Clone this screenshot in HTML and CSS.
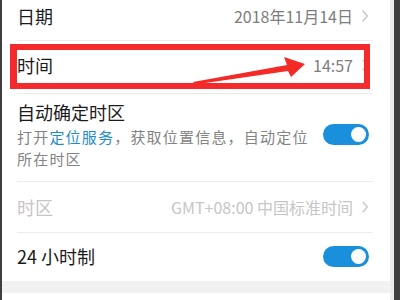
FILE: index.html
```
<!DOCTYPE html>
<html lang="zh-CN">
<head>
<meta charset="utf-8">
<link rel="stylesheet" href="styles.css">
</head>
<body>
<div class="screen">
  <div class="panel">
    <div class="row row-date">
      <span class="label">日期</span>
      <span class="value">2018年11月14日</span>
      <svg class="chev" width="6" height="12" viewBox="0 0 6 12"><polyline points="0.7,0.7 5.3,6 0.7,11.3" fill="none" stroke="#c4c4c4" stroke-width="1.4"/></svg>
    </div>
    <div class="row row-time">
      <span class="label">时间</span>
      <span class="value">14:57</span>
      <svg class="chev" width="6" height="12" viewBox="0 0 6 12"><polyline points="0.7,0.7 5.3,6 0.7,11.3" fill="none" stroke="#c4c4c4" stroke-width="1.4"/></svg>
    </div>
    <div class="row row-auto">
      <div class="text">
        <div class="label">自动确定时区</div>
        <div class="sub">打开<span class="link">定位服务</span>，获取位置信息，自动定位</div>
        <div class="sub">所在时区</div>
      </div>
      <span class="toggle"><span class="knob"></span></span>
    </div>
    <div class="row row-zone">
      <span class="label dim">时区</span>
      <span class="value dim">GMT+08:00 中国标准时间</span>
      <svg class="chev" width="6" height="12" viewBox="0 0 6 12"><polyline points="0.7,0.7 5.3,6 0.7,11.3" fill="none" stroke="#c8c8c8" stroke-width="1.4"/></svg>
    </div>
    <div class="row row-24">
      <span class="label">24 小时制</span>
      <span class="toggle"><span class="knob"></span></span>
    </div>
    <div class="band"></div>
  </div>
  <div class="redbox"></div>
  <svg class="arrow" width="400" height="300" viewBox="0 0 400 300">
    <polygon points="193,82 287,65 284,57 305,64 291,77 288,71 195,84.5" fill="#f42a26"/>
  </svg>
</div>
</body>
</html>
```
FILE: styles.css
```
html, body {
  margin: 0;
  padding: 0;
}
body {
  width: 400px;
  height: 300px;
  overflow: hidden;
  background: #3e3e3e;
  font-family: "Noto Sans CJK SC", "Noto Sans", sans-serif;
}
.screen {
  position: relative;
  width: 400px;
  height: 300px;
  display: flex;
}
.panel {
  margin-left: 2px;
  width: 388px;
  height: 300px;
  background: #ffffff;
  border-right: 4px solid #ececec;
  display: flex;
  flex-direction: column;
}
.row {
  margin: 0 17px 0 15px;
  display: flex;
  align-items: center;
  border-bottom: 1px solid #ededed;
  box-sizing: border-box;
}
.label {
  font-size: 18px;
  color: #1b1b1b;
  flex: 1;
  white-space: nowrap;
}
.value {
  font-size: 16px;
  color: #7d7d7d;
  margin-right: 9px;
  white-space: nowrap;
}
.chev {
  margin-right: 5px;
  flex: none;
}
.dim {
  color: #c6c6c6;
}
.row-date {
  height: 41px;
  padding-bottom: 9px;
}
.row-time {
  height: 53px;
  padding-bottom: 4px;
}
.row-auto {
  height: 88px;
  align-items: flex-start;
}
.row-auto .text {
  flex: 1;
  padding-top: 6px;
}
.row-auto .label {
  display: block;
  line-height: 25px;
}
.sub {
  font-size: 15px;
  letter-spacing: 1.2px;
  line-height: 22px;
  color: #838383;
  white-space: nowrap;
}
.row-auto .label + .sub {
  margin-top: 1px;
}
.link {
  color: #1f8cc6;
}
.row-auto .toggle {
  margin-top: 30px;
}
.toggle {
  flex: none;
  width: 46px;
  height: 21px;
  border-radius: 11px;
  background: #1a8fdc;
  margin-right: 4px;
  display: flex;
  align-items: center;
  justify-content: flex-end;
  padding-right: 3px;
  box-sizing: border-box;
}
.knob {
  width: 15px;
  height: 15px;
  border-radius: 50%;
  background: #ffffff;
}
.row-zone {
  height: 51px;
}
.row-24 {
  height: 48px;
  border-bottom: none;
  padding-bottom: 2px;
}
.band {
  height: 12px;
  background: #f1f1f1;
}
.redbox {
  position: absolute;
  left: 10px;
  top: 44px;
  width: 360px;
  height: 45px;
  box-sizing: border-box;
  border: 6px solid #f42a2c;
  border-left-width: 7px;
}
.arrow {
  position: absolute;
  left: 0;
  top: 0;
}
```
